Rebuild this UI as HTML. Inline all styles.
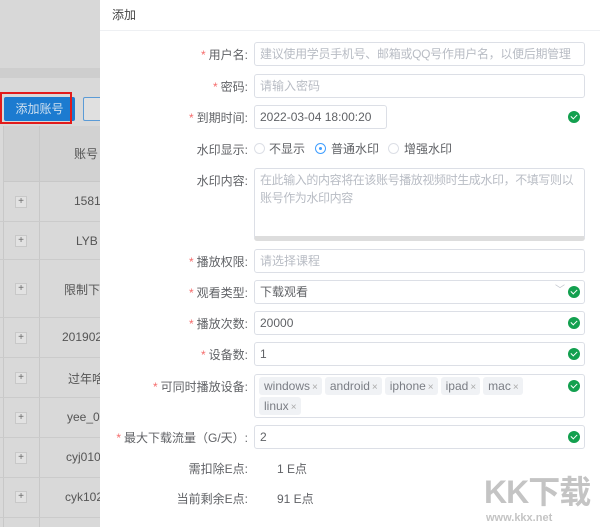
<!DOCTYPE html>
<html style="width:600px;height:527px;overflow:hidden"><head><meta charset="utf-8"><style>
*{margin:0;padding:0;box-sizing:border-box}
body{width:600px;height:527px;overflow:hidden;position:relative;background:#d8d8d8;font-family:"Liberation Sans","Noto Sans CJK SC",sans-serif;font-size:12px;color:#606266;white-space:nowrap}
.a{position:absolute}
.lbl{position:absolute;right:352px;font-size:12px;color:#606266;white-space:nowrap}
.lbl b{color:#f56c6c;font-weight:normal;margin-right:3px}
.inp{position:absolute;left:254px;width:331px;height:24px;border:1px solid #dcdfe6;border-radius:3px;padding-left:5px;line-height:22px;font-size:12px;color:#606266;background:#fff;overflow:hidden}
.ph{color:#b8bcc4}
.ck{position:absolute;left:568px;width:12px;height:12px;border-radius:50%;background:#13a04f}
.ck:after{content:"";position:absolute;left:3px;top:3px;width:5px;height:3px;border-left:1.5px solid #fff;border-bottom:1.5px solid #fff;transform:rotate(-45deg)}
.tag{display:inline-block;background:#f0f2f5;color:#7a7d84;border-radius:3px;height:18px;line-height:18px;padding:0 4px 0 5px;margin-right:3px;font-size:12px}
.tag i{font-style:normal;font-size:10px;color:#aaa;margin-left:2px}
.row{position:absolute;left:0;width:100px;border-bottom:1px solid #cbcbcb;font-size:12px;color:#555;overflow:hidden}
.pl{position:absolute;left:15px;width:12px;height:12px;border:1px solid #c8c8c8;font-size:10px;line-height:10px;text-align:center;color:#666;background:#e2e2e2}
#left{position:absolute;left:0;top:0;width:100px;height:527px;overflow:hidden}
</style></head><body>
<div id="left">
<div class="a" style="left:0;top:0;width:100px;height:68px;background:#d8d8d8"></div>
<div class="a" style="left:0;top:68px;width:100px;height:10px;background:#cecece"></div>
<div class="a" style="left:0;top:78px;width:100px;height:449px;background:#d9d9d9"></div>
<div class="a" style="left:4px;top:97px;width:71px;height:24px;background:#1c7bd0;border-radius:2px;color:#cfe0ef;text-align:center;line-height:24px;font-size:12px">添加账号</div>
<div class="a" style="left:0;top:92px;width:72px;height:32px;border:2px solid #e21b1b"></div>
<div class="a" style="left:83px;top:97px;width:20px;height:24px;border:1px solid #5b9bd6;border-radius:2px;background:#e0e0e0"></div>
<div class="a" style="left:4px;top:126px;width:96px;height:56px;background:#d2d2d2;border-bottom:1px solid #c8c8c8"></div>
<div class="a" style="left:39px;top:126px;width:1px;height:401px;background:#c8c8c8"></div>
<div class="a" style="left:3px;top:126px;width:1px;height:401px;background:#c8c8c8"></div>
<div class="a" style="left:74px;top:145px;color:#555">账号</div>
<div class="row" style="top:182px;height:40px"><span class="pl" style="top:14px">+</span><span class="a" style="left:74px;top:12px">1581</span></div>
<div class="row" style="top:222px;height:38px"><span class="pl" style="top:13px">+</span><span class="a" style="left:76px;top:12px">LYB</span></div>
<div class="row" style="top:260px;height:58px"><span class="pl" style="top:23px">+</span><span class="a" style="left:64px;top:21px">限制下载</span></div>
<div class="row" style="top:318px;height:40px"><span class="pl" style="top:14px">+</span><span class="a" style="left:62px;top:12px">20190211</span></div>
<div class="row" style="top:358px;height:40px"><span class="pl" style="top:14px">+</span><span class="a" style="left:68px;top:12px">过年啥</span></div>
<div class="row" style="top:398px;height:40px"><span class="pl" style="top:14px">+</span><span class="a" style="left:67px;top:12px">yee_01</span></div>
<div class="row" style="top:438px;height:40px"><span class="pl" style="top:14px">+</span><span class="a" style="left:66px;top:12px">cyj0102</span></div>
<div class="row" style="top:478px;height:40px"><span class="pl" style="top:13px">+</span><span class="a" style="left:65px;top:12px">cyk102</span></div>
</div>

<div class="a" style="left:100px;top:0;width:500px;height:527px;background:#fff"></div>
<div class="a" style="left:100px;top:30px;width:500px;height:1px;background:#eef0f3"></div>
<div class="a" style="left:112px;top:6px;font-size:12px;color:#444">添加</div>

<div class="lbl" style="top:46px"><b>*</b>用户名:</div>
<div class="inp ph" style="top:42px;letter-spacing:-0.3px">建议使用学员手机号、邮箱或QQ号作用户名，以便后期管理</div>
<div class="lbl" style="top:78px"><b>*</b>密码:</div>
<div class="inp ph" style="top:74px">请输入密码</div>
<div class="lbl" style="top:109px"><b>*</b>到期时间:</div>
<div class="inp" style="top:105px;width:133px">2022-03-04 18:00:20</div>
<div class="ck" style="top:111px"></div>
<div class="lbl" style="top:141px">水印显示:</div>
<div class="a" style="left:254px;top:143px;width:11px;height:11px;border:1px solid #dcdfe6;border-radius:50%"></div>
<div class="a" style="left:269px;top:140px;color:#606266">不显示</div>
<div class="a" style="left:315px;top:143px;width:11px;height:11px;border:1px solid #409eff;border-radius:50%"><div style="margin:3px;width:3px;height:3px;border-radius:50%;background:#409eff"></div></div>
<div class="a" style="left:331px;top:140px;color:#606266">普通水印</div>
<div class="a" style="left:388px;top:143px;width:11px;height:11px;border:1px solid #dcdfe6;border-radius:50%"></div>
<div class="a" style="left:404px;top:140px;color:#606266">增强水印</div>
<div class="lbl" style="top:172px">水印内容:</div>
<div class="inp ph" style="top:168px;height:73px;line-height:18px;padding-top:2px;border-bottom:5px solid #ddd;white-space:normal;letter-spacing:-0.4px">在此输入的内容将在该账号播放视频时生成水印，不填写则以账号作为水印内容</div>
<div class="lbl" style="top:253px"><b>*</b>播放权限:</div>
<div class="inp ph" style="top:249px">请选择课程</div>
<div class="lbl" style="top:284px"><b>*</b>观看类型:</div>
<div class="inp" style="top:280px">下载观看<span class="a" style="left:300px;top:-1px;color:#c0c4cc;font-size:10px">﹀</span></div>
<div class="ck" style="top:286px"></div>
<div class="lbl" style="top:315px"><b>*</b>播放次数:</div>
<div class="inp" style="top:311px">20000</div>
<div class="ck" style="top:317px"></div>
<div class="lbl" style="top:346px"><b>*</b>设备数:</div>
<div class="inp" style="top:342px">1</div>
<div class="ck" style="top:348px"></div>
<div class="lbl" style="top:378px"><b>*</b>可同时播放设备:</div>
<div class="inp" style="top:374px;height:44px;padding:2px 0 0 4px;line-height:18px;white-space:normal">
<span class="tag">windows<i>×</i></span><span class="tag">android<i>×</i></span><span class="tag">iphone<i>×</i></span><span class="tag">ipad<i>×</i></span><span class="tag">mac<i>×</i></span><br><span class="tag" style="margin-top:2px">linux<i>×</i></span></div>
<div class="ck" style="top:380px"></div>
<div class="lbl" style="top:429px"><b>*</b>最大下载流量（G/天）:</div>
<div class="inp" style="top:425px">2</div>
<div class="ck" style="top:431px"></div>
<div class="lbl" style="top:460px">需扣除E点:</div>
<div class="a" style="left:277px;top:460px">1 E点</div>
<div class="lbl" style="top:490px">当前剩余E点:</div>
<div class="a" style="left:277px;top:490px">91 E点</div>
<div class="a" style="left:484px;top:474px;font-size:32px;font-weight:bold;color:#c4c4c4;line-height:36px;letter-spacing:-1px">KK下载</div>
<div class="a" style="left:486px;top:512px;font-size:11px;font-weight:bold;color:#c4c4c4">www.kkx.net</div>
</body></html>
